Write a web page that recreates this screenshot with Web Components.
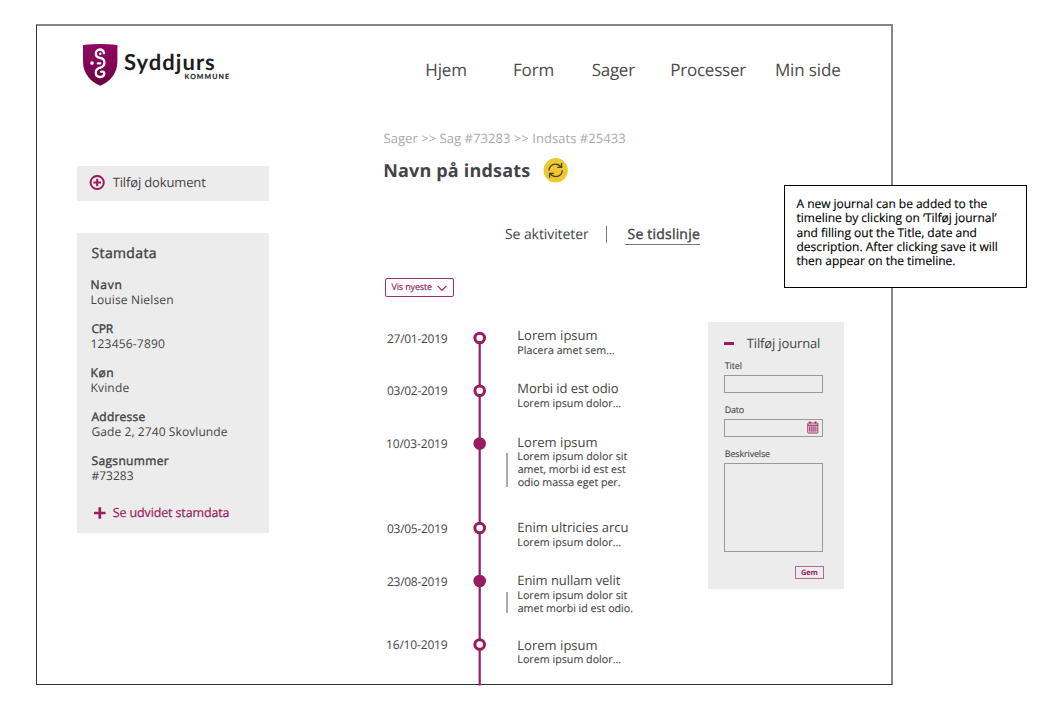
<!DOCTYPE html>
<html lang="da">
<head>
<meta charset="utf-8">
<title>Syddjurs Kommune</title>
<style>
body{margin:0;background:#fff;font-family:"Open Sans","Noto Sans",sans-serif;color:#444;text-rendering:geometricPrecision}
</style>
</head>
<body>
<case-page></case-page>
<script>
const canvas = document.createElement('canvas').getContext('2d');
const define = (name, html, init) => customElements.define(name, class extends HTMLElement {
  connectedCallback() {
    if (this.shadowRoot) return;
    this.attachShadow({mode: 'open'}).innerHTML = typeof html === 'function' ? html(this) : html;
    if (init) init(this);
  }
});

/* One line of text, tracked so that its visible width is the "w" attribute. */
define('ink-text', '<style>:host{display:block;white-space:nowrap}</style><slot></slot>', el => {
  const cs = getComputedStyle(el), text = el.textContent;
  canvas.font = `${cs.fontWeight} ${cs.fontSize} ${cs.fontFamily}`;
  const m = canvas.measureText(text);
  const ink = m.actualBoundingBoxRight + m.actualBoundingBoxLeft;
  el.style.letterSpacing = ((+el.getAttribute('w') - ink) / (text.length - 1)).toFixed(3) + 'px';
  el.style.textIndent = m.actualBoundingBoxLeft.toFixed(2) + 'px';
  el.style.width = el.getAttribute('w') + 'px';
});

define('brand-logo', `<style>
:host{display:flex;font-family:Lato,sans-serif;color:#1d1d1b}
.words{margin:4px 0 0 6.400px}
.name{font-size:22px;line-height:27px;font-weight:700}
.sub{font-size:7px;line-height:9px;font-weight:700;margin:-2px 0 0 60.500px;-webkit-text-stroke:.15px}
svg{display:block;flex:none}
</style>
<svg width="35" height="43" viewBox="0 0 35 43">
<defs><linearGradient id="g" x2="0" y2="1"><stop offset="0" stop-color="#8f0a61"/><stop offset=".45" stop-color="#850558"/><stop offset="1" stop-color="#6b0043"/></linearGradient></defs>
<path d="M0 1Q17.200-.8 34.400 1V17.600C34.400 29.500 27 37.800 17.200 41.800C7.400 37.800 0 29.500 0 17.600Z" fill="url(#g)"/>
<g fill="none" stroke="#fff" stroke-width="2.300" stroke-linecap="round">
<path d="M21 9.200C20.600 6.800 19 5.500 16.900 5.500C14.500 5.500 12.800 7.300 12.800 9.600C12.800 12.200 14.700 13.700 17.200 14C19.800 14.300 21.400 16 21.400 18.500C21.400 21.300 19.600 22.900 17.200 23.600C14.600 24.300 12.800 26 12.800 28.600C12.800 31.300 14.600 33 17 33C19.500 33 21.300 31.500 21.300 29.300C21.300 27.800 19.900 27.200 18.200 27.900"/>
<path d="M14.800 19.300H17.200"/></g>
<circle cx="17.300" cy="9.700" r="1.200" fill="#fff"/><circle cx="9" cy="19.100" r="1.800" fill="#fff"/>
</svg>
<div class="words"><ink-text class="name" w="90">Syddjurs</ink-text><ink-text class="sub" w="44.300">KOMMUNE</ink-text></div>`);

define('main-nav', `<style>
:host{display:grid;grid-template-columns:87.700px 77.700px 79.600px 104.700px 70px;font-size:17px;line-height:23px;color:#4a4a4a}
</style>
<ink-text w="40">Hjem</ink-text><ink-text w="39.500">Form</ink-text><ink-text w="43.500">Sager</ink-text><ink-text w="75">Processer</ink-text><ink-text w="64.200">Min side</ink-text>`);

define('add-document', `<style>
:host{display:flex;box-sizing:border-box;height:35px;padding:7px 0 0 12.700px;background:#ececec;font-size:13px;line-height:18px}
svg{margin:2px 7.500px 0 0}
</style>
<svg width="16" height="16" viewBox="0 0 16 16" fill="none" stroke="#9b1b60" stroke-width="2"><circle cx="8.200" cy="7.500" r="6.600"/><path d="M4.400 7.500h7.600M8.200 3.700v7.600"/></svg>
<ink-text w="93.500">Tilføj dokument</ink-text>`);

define('data-field', el => `<style>
:host{display:block;font-size:12px;line-height:15px}
.k{-webkit-text-stroke:.4px}
</style><ink-text class="k" w="${el.getAttribute('kw')}">${el.getAttribute('label')}</ink-text><ink-text w="${el.getAttribute('vw')}">${el.getAttribute('value')}</ink-text>`);

define('master-data', `<style>
:host{display:block;box-sizing:border-box;height:300px;padding:11px 0 0 15px;background:#ececec}
h2{margin:0 0 14px;font-size:14px;line-height:19px;font-weight:400;-webkit-text-stroke:.4px}
.f{display:grid;gap:14px}
.more{display:flex;margin:21px 0 0 2.300px;font-size:12.500px;line-height:17px;color:#9b1b60}
.more ink-text{-webkit-text-stroke:.2px}
svg{margin:3px 7px 0 0}
</style>
<h2><ink-text w="64.300">Stamdata</ink-text></h2>
<div class="f">
<data-field label="Navn" kw="29.900" value="Louise Nielsen" vw="81.700"></data-field>
<data-field label="CPR" kw="22.300" value="123456-7890" vw="73.500"></data-field>
<data-field label="Køn" kw="21.800" value="Kvinde" vw="37.900"></data-field>
<data-field label="Addresse" kw="54" value="Gade 2, 2740 Skovlunde" vw="136.200"></data-field>
<data-field label="Sagsnummer" kw="77.300" value="#73283" vw="42.200"></data-field>
</div>
<div class="more"><svg width="12" height="12" viewBox="0 0 12 12" stroke="#9b1b60" stroke-width="2.700"><path d="M0 6h11.600M5.800 .3v11.400"/></svg><ink-text w="115.800">Se udvidet stamdata</ink-text></div>`);

define('page-heading', `<style>
:host{display:block}
.crumb{font-size:13px;line-height:18px;color:#aaa}
.row{display:flex;margin-top:10px;height:26px}
h1{margin:2px 13px 0 .7px;font-size:18px;line-height:24px;font-weight:700;color:#444}
</style>
<ink-text class="crumb" w="241.700">Sager &gt;&gt; Sag #73283 &gt;&gt; Indsats #25433</ink-text>
<div class="row"><h1><ink-text w="146">Navn på indsats</ink-text></h1>
<svg width="26" height="26" viewBox="0 0 26 26"><g transform="translate(.2 .9)"><circle cx="12.500" cy="12.400" r="12.200" fill="#ecc92f"/>
<g fill="none" stroke="#494430" stroke-width="1.300"><path d="M5.800 12.600C5.800 8.900 8.500 6.300 12.100 6.300C14.800 6.300 16.500 7.300 17.800 9.100M19.100 12.300C19.100 16 16.400 18.700 12.800 18.700C10.200 18.700 8.300 17.600 7 15.800"/><path d="M18.400 5.100V9.500H14M6.400 19.900V15.500H10.800"/></g></g></svg></div>`);

define('view-tabs', `<style>
:host{display:flex;font-size:14px;line-height:19px;height:21px}
i{width:1px;height:17px;background:#777;margin:1px 18px 0 17.300px}
.on{box-sizing:border-box;width:74.500px;height:20px;padding-left:2.300px;border-bottom:1px solid #777}
.on ink-text{-webkit-text-stroke:.4px}
</style>
<ink-text w="84">Se aktiviteter</ink-text><i></i><div class="on"><ink-text w="72.300">Se tidslinje</ink-text></div>`);

define('sort-select', `<style>
:host{display:flex;box-sizing:border-box;width:69px;height:19px;border:1px solid #a3316f;border-radius:2px;padding:1px 0 0 5.500px;font-size:9px;line-height:13px;color:#9b1b60}
ink-text{-webkit-text-stroke:.2px}
svg{margin:5px 0 0 5.500px}
</style><ink-text w="40.500">Vis nyeste</ink-text><svg width="10" height="7" viewBox="0 0 10 7" fill="none" stroke="#9b1b60" stroke-width="1.100"><path d="M.6 .8L5 5.400L9.400 .8"/></svg>`);

define('timeline-entry', el => {
  const a = n => el.getAttribute(n), cy = +a('cy'), open = !el.hasAttribute('filled'), first = el.hasAttribute('first');
  const lines = JSON.parse(a('lines'));
  return `<style>
:host{display:grid;grid-template-columns:85.800px 45.500px 1fr;height:${a('h')}px}
.date{font-size:12px;line-height:17px;margin-top:${a('dt')}px}
svg{display:block;overflow:visible}
.title{font-size:13px;line-height:18px;margin-top:${a('tt')}px}
.body{position:relative;font-size:10.700px;line-height:13px;margin-top:${a('bg')}px;-webkit-text-stroke:.1px}
.body ink-text+ink-text{margin-left:-.6px}
.bar{position:absolute;left:-11.800px;top:${a('bt') || -2}px;width:1.500px;height:${a('bar') || 0}px;background:#aaa}
</style>
<ink-text class="date" w="60.800">${a('date')}</ink-text>
<svg width="14" height="${a('h')}"><path d="M6.700 ${first ? cy : 0}V${a('h')}" stroke="#9b1b60" stroke-width="2.200"/><circle cx="6.700" cy="${cy}" r="${open ? 4.8 : 6.3}" fill="${open ? '#fff' : '#9b1b60'}" ${open ? 'stroke="#9b1b60" stroke-width="3"' : ''}/></svg>
<div><ink-text class="title" w="${a('tw')}">${a('title')}</ink-text><div class="body">${lines.map(l => `<ink-text w="${l[1]}">${l[0]}</ink-text>`).join('')}${a('bar') ? '<span class="bar"></span>' : ''}</div></div>`;
});

define('case-timeline', `<style>:host{display:block}</style>
<timeline-entry first h="53" cy="7" date="27/01-2019" dt="-1" title="Lorem ipsum" tw="78.300" tt="-5" bg="1" lines='[["Placera amet sem...",96.500]]'></timeline-entry>
<timeline-entry h="53" cy="6.700" date="03/02-2019" dt="-2" title="Morbi id est odio" tw="100.500" tt="-5" bg="1" lines='[["Lorem ipsum dolor...",103]]'></timeline-entry>
<timeline-entry filled h="84" cy="6.500" date="10/03-2019" dt="-2" title="Lorem ipsum" tw="78.300" tt="-4" bg="0" bt="2" bar="34" lines='[["Lorem ipsum dolor sit",109.300],["amet, morbi id est est",108.300],["odio massa eget per.",103]]'></timeline-entry>
<timeline-entry h="53" cy="7" date="03/05-2019" dt="-1" title="Enim ultricies arcu" tw="109.300" tt="-3" bg="1" lines='[["Lorem ipsum dolor...",103]]'></timeline-entry>
<timeline-entry filled h="64" cy="7" date="23/08-2019" dt="-1" title="Enim nullam velit" tw="102.500" tt="-3" bg="1" bt="1.500" bar="21" lines='[["Lorem ipsum dolor sit",109.300],["amet morbi id est odio.",115.500]]'></timeline-entry>
<timeline-entry h="47.500" cy="6.500" date="16/10-2019" dt="-2" title="Lorem ipsum" tw="78.300" tt="-2" bg="0" lines='[["Lorem ipsum dolor...",103]]'></timeline-entry>`);

define('form-box', el => `<style>
:host{display:block;font-size:9px;line-height:13px}
.l{margin-left:.8px;-webkit-text-stroke:.1px}
.box{box-sizing:border-box;width:99.500px;height:${el.getAttribute('h')}px;margin-top:3px;border:1px solid #999;display:flex;justify-content:flex-end}
</style><ink-text class="l" w="${el.getAttribute('w')}">${el.getAttribute('label')}</ink-text><div class="box"><slot></slot></div>`);

define('journal-form', `<style>
:host{display:block;box-sizing:border-box;height:267px;padding:12px 0 0 16px;background:#ececec}
header{display:flex;font-size:13px;line-height:18px;margin-bottom:7px}
header i{width:9.500px;height:3px;margin:8px 12.800px 0 .5px;background:#9b1b60}
.f{display:grid;gap:10px}
svg{display:block;margin:1px 3px 0 0}
button{all:unset;box-sizing:border-box;display:block;width:29px;height:13px;margin:14px 0 0 71px;padding-left:5px;border:1px solid #b5669a;font-size:7.500px;line-height:12px;font-weight:700;color:#9b1b60}
</style>
<header><i></i><ink-text w="73.300">Tilføj journal</ink-text></header>
<div class="f">
<form-box label="Titel" w="17" h="18"></form-box>
<form-box label="Dato" w="19" h="18"><svg width="12" height="13" viewBox="0 0 12 13" fill="none" stroke="#9b1b60" stroke-width=".9"><rect x=".8" y="2" width="10" height="10" rx=".5"/><path d="M.8 4.200h10" stroke-width="1.100"/><path d="M3 .4v2M8.600 .4v2" stroke-width="1.400"/><path d="M2.300 6h7M2.300 8h7M2.300 10h7M2.600 5.600v4.800M4.700 5.600v4.800M6.900 5.600v4.800M9 5.600v4.800" stroke-width=".7"/></svg></form-box>
<form-box label="Beskrivelse" w="45.300" h="89"></form-box>
</div>
<button><ink-text w="16.500">Gem</ink-text></button>`);

define('help-note', `<style>
:host{display:block;box-sizing:border-box;width:243px;height:103px;padding:10.700px 0 0 11.500px;border:1px solid #000;background:#fff;color:#000;font-size:12px;line-height:14.400px;-webkit-text-stroke:.15px}
</style>
<ink-text w="191">A new journal can be added to the</ink-text>
<ink-text w="200">timeline by clicking on ‘Tilføj journal’</ink-text>
<ink-text w="180">and filling out the Title, date and</ink-text>
<ink-text w="200.300">description. After clicking save it will</ink-text>
<ink-text w="158.800">then appear on the timeline.</ink-text>`);

define('case-page', `<style>
:host{display:block;position:relative;box-sizing:border-box;width:1050px;height:711px;padding:24px 0 0 36px;overflow:hidden}
.frame{box-sizing:border-box;width:857px;height:661px;border:solid;border-width:2px 2px 1px 1px;border-color:#868686 #868686 #333 #333}
.top{display:flex;height:103px}
brand-logo{margin:18px 0 0 45.700px;width:160px}
main-nav{margin:32px 0 0 183.600px}
.cols{display:grid;grid-template-columns:192.300px 461px;column-gap:114.700px;margin-left:39.500px}
aside{padding-top:37px;display:flex;flex-direction:column;gap:32px}
view-tabs{margin:42px 0 0 121.500px}
sort-select{margin:32px 0 0 1.500px}
.work{display:grid;grid-template-columns:324.500px 136px;margin-top:25px;height:362px}
case-timeline{margin:9px 0 0 3.500px}
help-note{position:absolute;left:784px;top:185px}
</style>
<div class="frame">
<div class="top"><brand-logo></brand-logo><main-nav></main-nav></div>
<div class="cols">
<aside><add-document></add-document><master-data></master-data></aside>
<main><page-heading></page-heading><view-tabs></view-tabs><sort-select></sort-select>
<div class="work"><case-timeline></case-timeline><journal-form></journal-form></div></main>
</div>
</div>
<help-note></help-note>`);
</script>
</body>
</html>
